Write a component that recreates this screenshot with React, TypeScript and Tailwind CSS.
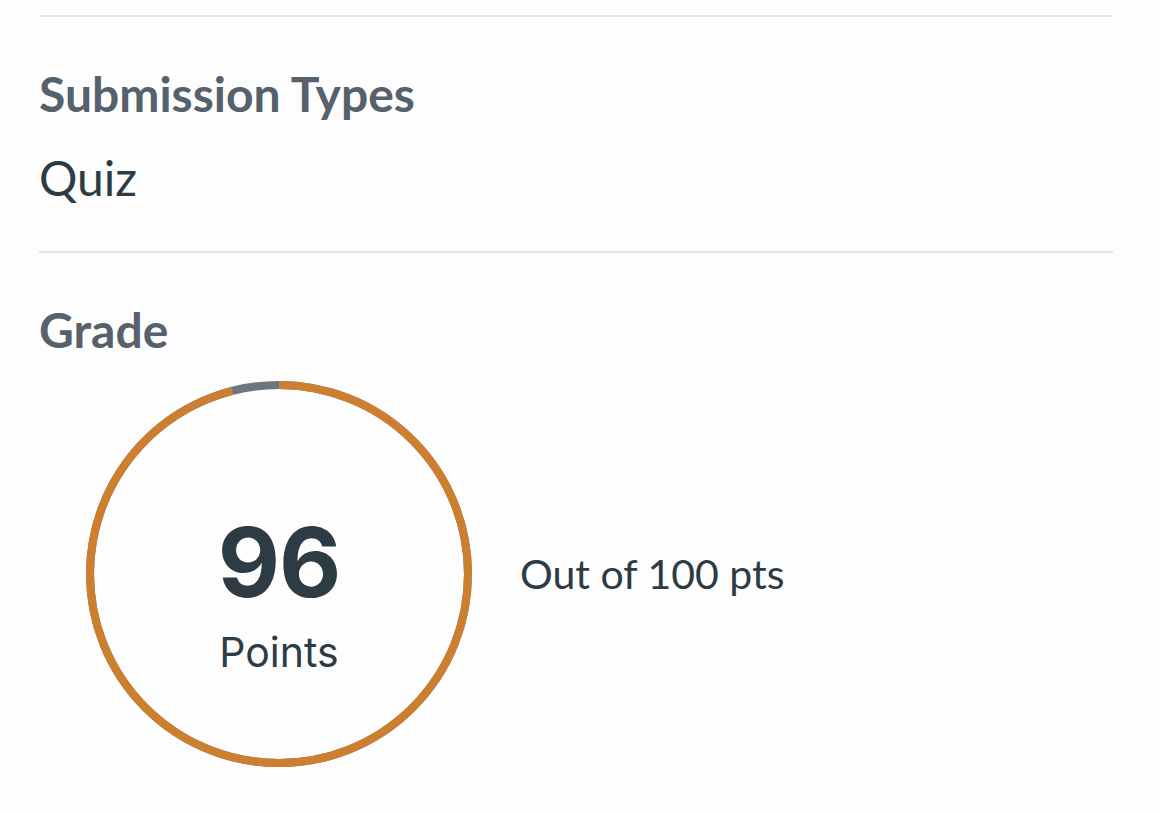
const GradeRing: React.FC<{ score: number; total: number }> = ({ score, total }) => {
    const size = 386;
    const stroke = 8;
    const r = (size - stroke) / 2;
    const c = 2 * Math.PI * r;
    const filled = (score / total) * c;
    return (
        <div className="relative w-[386px] h-[386px] shrink-0">
            <svg width={size} height={size} className="absolute inset-0 -rotate-90">
                <circle cx={size / 2} cy={size / 2} r={r} fill="none" stroke="#6b7680" strokeWidth={stroke} />
                <circle
                    cx={size / 2}
                    cy={size / 2}
                    r={r}
                    fill="none"
                    stroke="#cd7f2f"
                    strokeWidth={stroke}
                    strokeDasharray={`${filled} ${c}`}
                />
            </svg>
            <div className="absolute inset-0 flex flex-col items-center pt-[133px] font-['Inter',sans-serif] text-[#2d3b45]">
                <span className="text-[96px] font-bold leading-none tracking-[-1px]">{score}</span>
                <span className="text-[41px] leading-none mt-[22px]">Points</span>
            </div>
        </div>
    );
};

export default function App() {
    return (
        <div className="min-h-[813px] w-full bg-[#fdfdfd] pl-[39px] pr-[47px] pt-[15px] font-['Lato',sans-serif]">
            <hr className="border-t-2 border-[#e6e6e6]" />
            <section className="pt-[53px] pb-[49px]">
                <h2 className="text-[48px] font-bold text-[#56616c] leading-none">Submission Types</h2>
                <p className="text-[48px] text-[#2d3b45] leading-none mt-[36px]">Quiz</p>
            </section>
            <hr className="border-t-2 border-[#e6e6e6]" />
            <section className="pt-[53px]">
                <h2 className="text-[48px] font-bold text-[#56616c] leading-none">Grade</h2>
                <div className="flex items-center gap-[48px] mt-[27px] ml-[47px]">
                    <GradeRing score={96} total={100} />
                    <span className="text-[41px] text-[#2d3b45]">Out of 100 pts</span>
                </div>
            </section>
        </div>
    );
}
